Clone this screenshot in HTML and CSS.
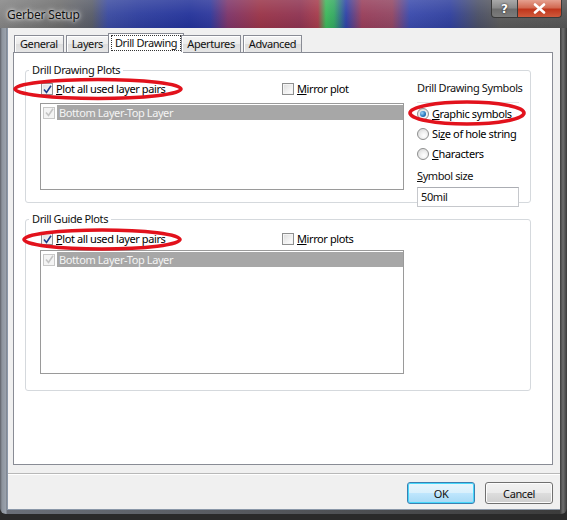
FILE: index.html
```html
<!DOCTYPE html>
<html>
<head>
<meta charset="utf-8">
<title>Gerber Setup</title>
<link rel="stylesheet" href="styles.css">
</head>
<body>
<div class="window">
  <div class="titlebar">
    <span class="title">Gerber Setup</span>
    <div class="caption-btns">
      <div class="cbtn help">?</div>
      <div class="cbtn close">
        <svg width="13" height="11" viewBox="0 0 13 11"><path d="M2 1.5 L11 9.5 M11 1.5 L2 9.5" stroke="#fff" stroke-width="2.6" stroke-linecap="round"/></svg>
      </div>
    </div>
  </div>
  <div class="frame">
    <div class="client">
      <div class="tabs">
        <div class="tab">General</div>
        <div class="tab">Layers</div>
        <div class="tab active"><span class="focus">Drill Drawing</span></div>
        <div class="tab">Apertures</div>
        <div class="tab">Advanced</div>
      </div>
      <div class="panel">
        <div class="group g1">
          <span class="legend">Drill Drawing Plots</span>
          <div class="group-body">
            <div class="left">
              <div class="opts">
                <label class="chk"><span class="box"><svg width="9" height="9" viewBox="0 0 9 9"><path d="M1 4.5 L3.5 7.5 L8 0.8" fill="none" stroke="#1d3f8c" stroke-width="1.6"/></svg></span><span><u>P</u>lot all used layer pairs</span></label>
                <label class="chk mirror"><span class="box"></span><span><u>M</u>irror plot</span></label>
              </div>
              <div class="listbox lb1">
                <div class="row"><span class="box dis"><svg width="9" height="9" viewBox="0 0 9 9"><path d="M1 4.5 L3.5 7.5 L8 0.8" fill="none" stroke="#c4c4c4" stroke-width="1.6"/></svg></span><span class="sel">Bottom Layer-Top Layer</span></div>
              </div>
            </div>
            <div class="right">
              <div class="sym-title">Drill Drawing Symbols</div>
              <div class="sep"></div>
              <label class="radio"><span class="dot on"></span><span><u>G</u>raphic symbols</span></label>
              <label class="radio"><span class="dot"></span><span>Si<u>z</u>e of hole string</span></label>
              <label class="radio"><span class="dot"></span><span><u>C</u>haracters</span></label>
              <div class="size-label"><u>S</u>ymbol size</div>
              <div class="input">50mil</div>
            </div>
          </div>
        </div>
        <div class="group g2">
          <span class="legend">Drill Guide Plots</span>
          <div class="group-body">
            <div class="left">
              <div class="opts">
                <label class="chk"><span class="box"><svg width="9" height="9" viewBox="0 0 9 9"><path d="M1 4.5 L3.5 7.5 L8 0.8" fill="none" stroke="#1d3f8c" stroke-width="1.6"/></svg></span><span><u>P</u>lot all used layer pairs</span></label>
                <label class="chk mirror"><span class="box"></span><span><u>M</u>irror plots</span></label>
              </div>
              <div class="listbox lb2">
                <div class="row"><span class="box dis"><svg width="9" height="9" viewBox="0 0 9 9"><path d="M1 4.5 L3.5 7.5 L8 0.8" fill="none" stroke="#c4c4c4" stroke-width="1.6"/></svg></span><span class="sel">Bottom Layer-Top Layer</span></div>
              </div>
            </div>
          </div>
        </div>
      </div>
      <div class="footer">
        <div class="btn default">OK</div>
        <div class="btn">Cancel</div>
      </div>
    </div>
  </div>
  <svg class="annot" width="567" height="520" viewBox="0 0 567 520">
    <ellipse cx="98" cy="89" rx="83" ry="9.5" fill="none" stroke="#e2121c" stroke-width="3.6"/>
    <ellipse cx="467" cy="113" rx="57" ry="11" fill="none" stroke="#e2121c" stroke-width="3.6"/>
    <ellipse cx="102" cy="239.5" rx="78" ry="9.5" fill="none" stroke="#e2121c" stroke-width="3.6"/>
  </svg>
</div>
</body>
</html>
```

FILE: styles.css
```css
* { box-sizing: border-box; }
html, body { margin: 0; padding: 0; }
body {
  background: #2a2a2a;
  font-family: "Noto Sans", "Open Sans", sans-serif;
  font-size: 11px;
  letter-spacing: -0.4px;
  color: #000;
  width: 567px;
  height: 520px;
  overflow: hidden;
  white-space: nowrap;
}
.window {
  position: relative;
  width: 567px;
  height: 514px;
  display: flex;
  flex-direction: column;
  border-radius: 0 0 6px 6px;
  overflow: hidden;
}
.titlebar {
  height: 28px;
  flex: none;
  display: flex;
  align-items: flex-start;
  justify-content: space-between;
  background:
    linear-gradient(180deg, rgba(255,255,255,0.14) 0, rgba(255,255,255,0.04) 50%, rgba(0,0,0,0.06) 100%),
    linear-gradient(90deg, #858585 0, #6c6c6c 60px, #585c68 92px, #3a4aa0 108px, #2e3e9e 140px, #24339a 190px, #2e389c 210px, #7e3468 228px, #9a3448 260px, #8e3452 300px, #a63c4c 318px, #3cb85a 326px, #34a862 334px, #2e42a8 346px, #983e5a 362px, #924662 392px, #3a4aac 410px, #30409e 450px, #4a4f66 478px, #5a5a5a 500px, #555 567px);
}
.title {
  margin: 6px 0 0 7px;
  font-family: "Noto Sans", sans-serif;
  font-size: 12px;
  letter-spacing: -0.2px;
  color: #111;
  text-shadow: 0 0 6px rgba(255,255,255,0.95), 0 0 3px rgba(255,255,255,0.9);
}
.caption-btns {
  display: flex;
  margin-right: 5px;
}
.cbtn {
  height: 18px;
  display: flex;
  align-items: center;
  justify-content: center;
  border: 1px solid #3a3a3a;
  border-top: none;
  color: #fff;
  font-weight: bold;
  font-size: 12px;
  letter-spacing: 0;
  font-family: "DejaVu Sans", sans-serif;
}
.help {
  width: 27px;
  border-radius: 0 0 0 4px;
  background: linear-gradient(180deg, #a9a9a9 0, #8a8a8a 45%, #6e6e6e 55%, #7c7c7c 100%);
  text-shadow: 0 0 2px #000;
}
.close {
  width: 44px;
  border-radius: 0 0 4px 0;
  border-left: none;
  background: linear-gradient(180deg, #e5a08f 0, #d26a52 45%, #c0361c 55%, #cf5a3c 100%);
}
.frame {
  flex: 1;
  display: flex;
  padding: 0 7px 4px 7px;
  background: linear-gradient(90deg, #5d6068 0, #8d949d 2px, #9aa2ad 6px, #6a6f78 7px, #3c3c3c 560px, #6f6f6f 563px, #3a3a3a 567px);
}
.client {
  flex: 1;
  background: #f0f0f0;
  display: flex;
  flex-direction: column;
  padding: 5px 7px 0 5px;
  border-left: 1px solid #8a97a8;
  border-bottom: 1px solid #8a97a8;
}
.tabs {
  display: flex;
  align-items: flex-end;
  height: 19px;
  padding-left: 1px;
  position: relative;
  z-index: 2;
}
.tab {
  height: 17px;
  padding: 0 5px;
  margin-right: 2px;
  border: 1px solid #898c95;
  border-bottom: none;
  background: linear-gradient(180deg, #f5f5f5 0, #ebebeb 50%, #dddddd 51%, #e6e6e6 100%);
  line-height: 15px;
  color: #111;
  box-shadow: inset 1px 1px 0 #fff;
}
.tab.active {
  height: 20px;
  margin: 0 0 -1px -3px;
  padding: 1px 2px 0 2px;
  background: #fff;
  box-shadow: none;
}
.tab.active + .tab { margin-left: -3px; }
.focus {
  display: block;
  padding: 0 3px;
  border: 1px dotted #333;
  line-height: 14px;
}
.panel {
  height: 413px;
  flex: none;
  background: #fff;
  border: 1px solid #898c95;
  padding: 17px 21px 0 11px;
}
.group {
  border: 1px solid #d5d9dd;
  border-radius: 3px;
  padding: 0 0 12px 14px;
}
.g2 { margin-top: 16px; padding-bottom: 16px; }
.legend {
  display: table;
  margin: -8px 0 0 -11px;
  padding: 0 3px;
  background: #fff;
  line-height: 14px;
  color: #111;
}
.group-body {
  display: flex;
  gap: 13px;
}
.left { width: 364px; }
.opts {
  display: flex;
  height: 14px;
  margin-top: 5px;
  align-items: center;
}
.g2 .opts { margin-top: 6px; }
.chk {
  display: flex;
  align-items: center;
  gap: 3px;
  margin-left: 1px;
  line-height: 14px;
}
.chk.mirror { margin-left: auto; width: 122px; }
.box {
  width: 12px;
  height: 12px;
  flex: none;
  border: 1px solid #8e8f8f;
  background: linear-gradient(135deg, #dcdcdc 0, #f6f6f6 70%, #fff 100%);
  box-shadow: inset 0 0 0 1px #f4f4f4;
  display: flex;
  align-items: center;
  justify-content: center;
}
.box.dis {
  border-color: #c8c8c8;
  background: #f4f4f4;
}
.listbox {
  border: 1px solid #9a9a9a;
  margin-top: 7px;
  background: #fff;
  padding: 1px 0 0 2px;
}
.lb1 { height: 87px; }
.lb2 { height: 124px; margin-top: 4px; }
.row {
  display: flex;
  align-items: center;
  height: 15px;
  gap: 2px;
}
.sel {
  flex: 1;
  height: 15px;
  background: #a7a7a7;
  color: #f4f4f4;
  line-height: 15px;
  padding-left: 2px;
}
.right {
  width: 110px;
  display: flex;
  flex-direction: column;
  margin-bottom: -20px;
}
.sym-title {
  margin-top: 4px;
  line-height: 14px;
  color: #111;
}
.sep {
  height: 1px;
  width: 102px;
  background: #e4e4e4;
  margin-top: 7px;
}
.radio {
  display: flex;
  align-items: center;
  gap: 3px;
  height: 20px;
  line-height: 14px;
}
.radio:first-of-type { margin-top: 1px; }
.dot {
  width: 12px;
  height: 12px;
  flex: none;
  border-radius: 50%;
  border: 1px solid #8e8f8f;
  background: radial-gradient(circle at 60% 65%, #fff 0, #f0f0f0 40%, #d0d0d0 100%);
  display: flex;
  align-items: center;
  justify-content: center;
}
.dot.on::after {
  content: "";
  width: 6px;
  height: 6px;
  border-radius: 50%;
  background: radial-gradient(circle at 35% 35%, #9fd3f5 0, #2b7bc0 55%, #174f8a 100%);
}
.size-label {
  margin-top: 5px;
  line-height: 14px;
  color: #111;
}
.input {
  margin-top: 4px;
  width: 102px;
  height: 20px;
  border: 1px solid #c6c8cc;
  border-top-color: #abadb3;
  padding-left: 3px;
  line-height: 18px;
  color: #111;
  background: #fff;
  position: relative;
}
.footer {
  margin: 8px -7px 0 -5px;
  flex: 1;
  border-top: 1px solid #b8b8b8;
  box-shadow: inset 0 1px 0 #fff;
  display: flex;
  justify-content: flex-end;
  gap: 10px;
  padding: 8px 7px 0 0;
}
.btn {
  width: 68px;
  height: 22px;
  border: 1px solid #707070;
  border-radius: 3px;
  background: linear-gradient(180deg, #f2f2f2 0, #ebebeb 48%, #dddddd 52%, #cfcfcf 100%);
  box-shadow: inset 0 0 0 1px #fcfcfc;
  display: flex;
  align-items: center;
  justify-content: center;
  color: #111;
}
.btn.default {
  border-color: #3c7fb1;
  box-shadow: inset 0 0 0 1px #48d8fb;
  background: linear-gradient(180deg, #eaf6fd 0, #d9f0fc 48%, #bee6fd 52%, #a7d9f5 100%);
}
.annot {
  position: absolute;
  left: 0;
  top: 0;
  pointer-events: none;
}
```
